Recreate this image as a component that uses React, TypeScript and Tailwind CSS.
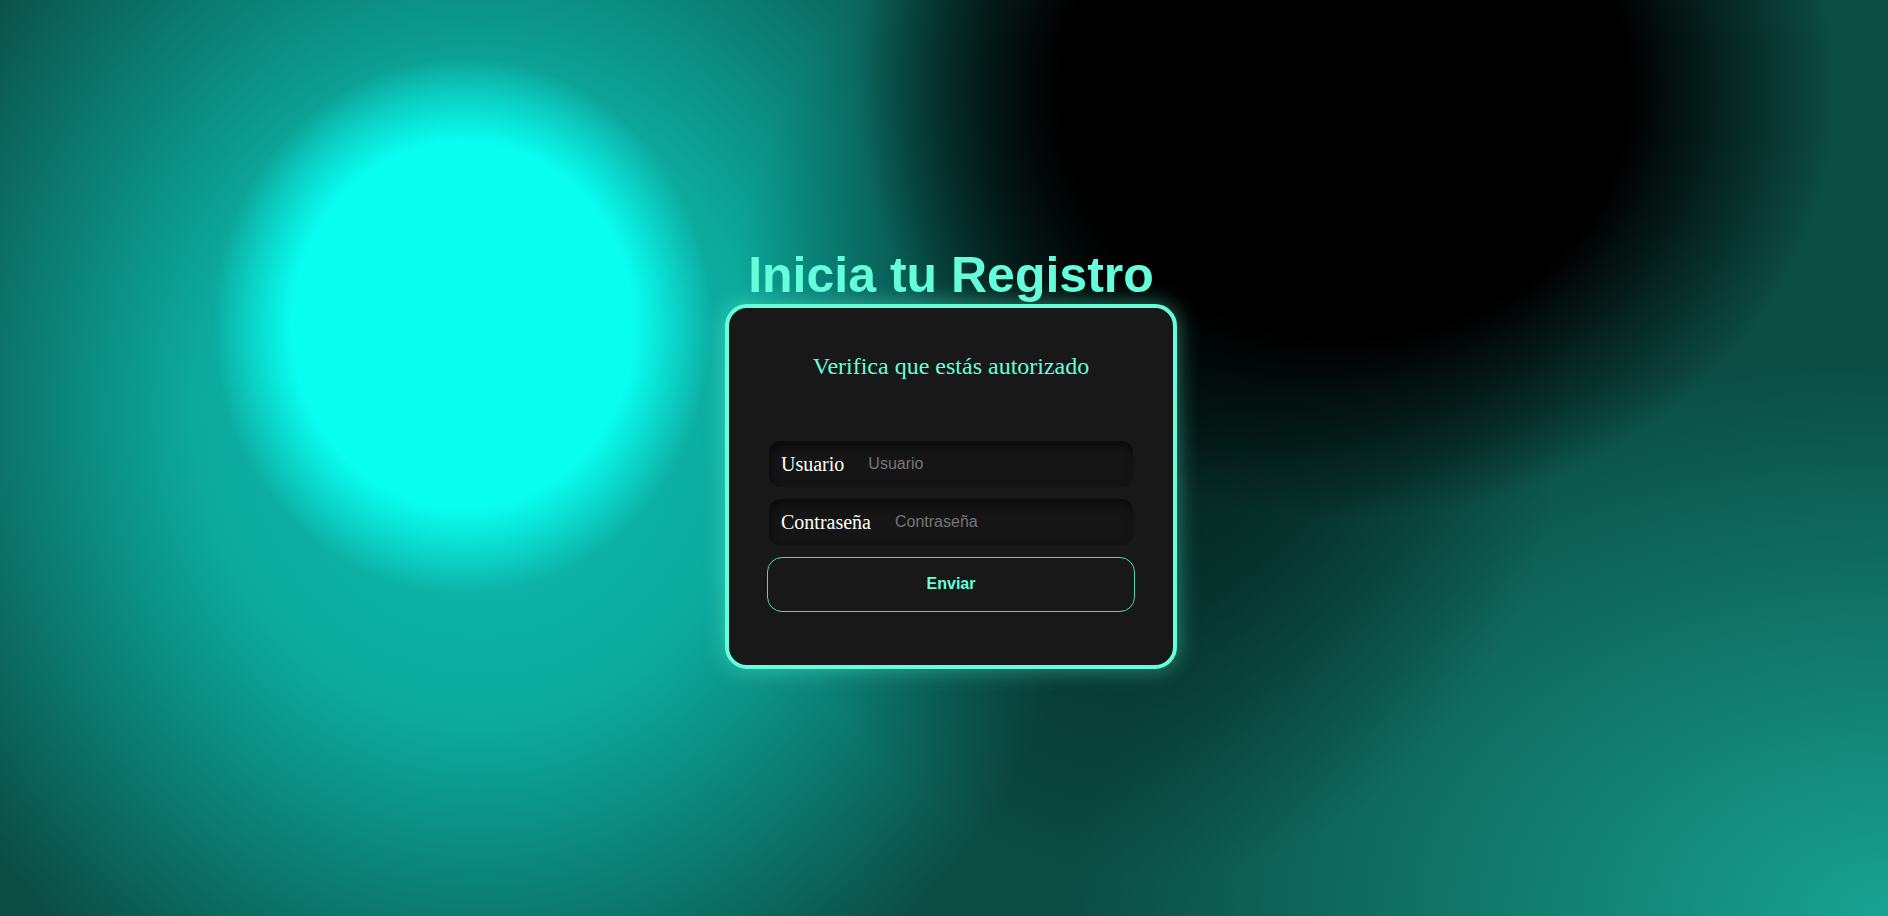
export default function App() {
  return (
    <main className="flex min-h-screen w-full flex-col items-center justify-center pl-[14px] leading-[1.15] bg-[#0b4c43] bg-[image:radial-gradient(ellipse_250px_268px_at_463px_325px,#08fff0_0%,#08fff0_68%,rgba(8,255,240,0)_100%),radial-gradient(ellipse_490px_430px_at_1345px_90px,#000_0%,#000_58%,rgba(0,0,0,0)_100%),radial-gradient(ellipse_420px_520px_at_1150px_360px,rgba(2,20,18,0.85)_0%,rgba(2,20,18,0)_100%),radial-gradient(ellipse_630px_700px_at_480px_410px,rgba(12,192,180,1)_0%,rgba(12,175,162,0.95)_45%,rgba(12,140,125,0)_100%),radial-gradient(ellipse_820px_560px_at_1888px_916px,#18a392_0%,rgba(24,163,146,0)_100%)]">
      <h1 className="text-[50px] leading-[1.15] font-bold text-[#64ffda] font-['Liberation_Sans',Arial,sans-serif]">
        Inicia tu Registro
      </h1>
      <div className="flex w-[452px] flex-col rounded-[22px] border-4 border-[#64ffda] bg-[#181818] px-[40px] pt-[45px] pb-[53px] shadow-[0_0_22px_rgba(100,255,218,0.45)]">
        <h2 className="text-center text-[24px] leading-[1.15] text-[#64ffda] font-['Liberation_Serif','Times_New_Roman',serif]">
          Verifica que estás autorizado
        </h2>
        <form className="mt-[60px] flex flex-col gap-[12px]" onSubmit={(e) => e.preventDefault()}>
          <label className="flex h-[46px] items-center rounded-[12px] bg-[#151515] pl-3 shadow-[inset_2px_5px_10px_rgba(0,0,0,0.55)]">
            <span className="shrink-0 text-[20px] text-white font-['Liberation_Serif','Times_New_Roman',serif]">
              Usuario
            </span>
            <input
              type="text"
              placeholder="Usuario"
              className="ml-[24px] w-full min-w-0 bg-transparent text-[16px] text-white outline-none placeholder:text-[#757575] font-['Liberation_Sans',Arial,sans-serif]"
            />
          </label>
          <label className="flex h-[46px] items-center rounded-[12px] bg-[#151515] pl-3 shadow-[inset_2px_5px_10px_rgba(0,0,0,0.55)]">
            <span className="shrink-0 text-[20px] text-white font-['Liberation_Serif','Times_New_Roman',serif]">
              Contraseña
            </span>
            <input
              type="password"
              placeholder="Contraseña"
              className="ml-[24px] w-full min-w-0 bg-transparent text-[16px] text-white outline-none placeholder:text-[#757575] font-['Liberation_Sans',Arial,sans-serif]"
            />
          </label>
          <button
            type="submit"
            className="-mx-0.5 h-[55px] rounded-[15px] border border-[#4fd9b4] bg-transparent text-[16px] font-bold text-[#64ffda] font-['Liberation_Sans',Arial,sans-serif]"
          >
            Enviar
          </button>
        </form>
      </div>
    </main>
  );
}
